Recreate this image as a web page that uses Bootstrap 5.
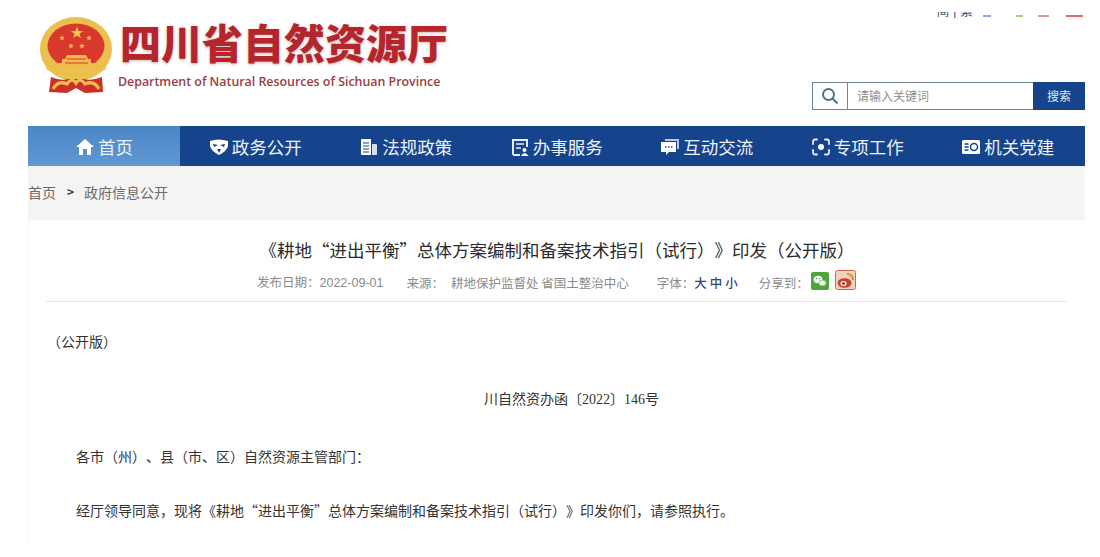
<!DOCTYPE html>
<html lang="zh-CN">
<head>
  <meta charset="UTF-8" />
  <meta name="viewport" content="width=device-width, initial-scale=1.0" />
  <title>四川省自然资源厅</title>
  <link href="https://cdn.jsdelivr.net/npm/bootstrap@5.3.3/dist/css/bootstrap.min.css" rel="stylesheet" />
  <style>
    html, body { height: 557px; overflow: hidden; }
    body { font-family: "Noto Sans CJK SC", "Liberation Sans", sans-serif; background: #fff; color: #333; text-spacing-trim: space-all; font-feature-settings: "chws" 0; }
    .site-wrap { margin-left: 28px; width: 1057px; }
    .site-head { height: 126px; }
    .emblem { margin: 17px 6px 0 12px; width: 74px; height: 78px; flex: none; }
    .brand-cn { font-weight: 900; font-size: 41px; line-height: 48px; color: #b4262c; margin-top: 17px; white-space: nowrap; text-shadow: 0 1px 3px rgba(120,30,30,.35); }
    .brand-en { font-family: "Open Sans", sans-serif; font-weight: 600; font-size: 12.4px; line-height: 16px; color: #9a3d45; margin: 9px 0 0 -2px; white-space: nowrap; }
    .lang-strip { height: 8px; margin-top: 12px; overflow: hidden; margin-right: 2px; font-size: 13px; color: #44577e; }
    .lang-text { margin-top: -9px; line-height: 16px; white-space: nowrap; font-family: "Liberation Sans", "Noto Sans CJK SC", sans-serif; }
    .dash-mark { display: block; height: 2px; margin-top: 3px; }
    .search-box { width: 273px; height: 28px; border: 1px solid #6e8598; margin-top: 62px; }
    .search-icon { width: 35px; border-right: 1px solid #6e8598; }
    .search-input { font-size: 12px; color: #8d8d8d; padding-left: 9px; line-height: 26px; }
    .search-btn { width: 52px; margin: -1px; background: #15448c; color: #dfe8f5; font-size: 12px; line-height: 28px; text-align: center; }
    .main-nav { height: 40px; background: #15448c; }
    .nav-cell { width: 150.5px; color: #eef2f8; font-size: 17.5px; gap: 3px; white-space: nowrap; padding-top: 3px; }
    .nav-cell.is-on { background: linear-gradient(#4b86c6, #6198d2); width: 152px; }
    .nav-ico { width: 20px; height: 20px; flex: none; margin-top: -2px; }
    .crumb-bar { height: 54px; background: #f4f4f5; font-size: 14px; color: #6a6a6a; padding-bottom: 2px; }
    .crumb-sep { color: #333; margin: 0 10px 0 11px; font-weight: 700; font-size: 12px; }
    .article-box { border-left: 1px solid #f5f5f5; height: 325px; }
    .art-title { font-size: 17.5px; line-height: 24px; color: #2b2b2b; padding-top: 18px; margin: 0; font-weight: 400; }
    .art-meta { font-size: 12.5px; color: #8b8b8b; height: 32px; margin: 8px 18px 0 17px; padding: 0 0 5px 211px; border-bottom: 1px solid #e6e6e6; white-space: nowrap; }
    .meta-num { font-family: "Liberation Sans", sans-serif; }
    .meta-from { margin-left: 23px; }
    .meta-src { margin-left: 7px; }
    .meta-font { margin-left: 28px; }
    .meta-share { margin-left: 18px; }
    .font-pick { color: #34437f; font-weight: 500; letter-spacing: 3px; }
    .share-wx { margin: 2px 0 0 2px; }
    .share-wb { margin-left: 6px; }
    .art-body { font-size: 14px; color: #333; line-height: 20px; }
    .art-body p { margin: 0; white-space: nowrap; }
    .num-serif { font-family: "Liberation Serif", serif; }
    .line-a { padding: 29px 0 0 18px; }
    .line-b { padding-top: 37px; padding-left: 455px; }
    .line-c { padding: 36px 0 0 47px; }
    .line-d { padding: 34px 0 0 47px; }
  </style>
</head>
<body>
  <div class="site-wrap">
    <header class="site-head d-flex justify-content-between">
      <div class="d-flex">
        <svg class="emblem" viewBox="0 0 74 78">
          <defs>
            <polygon id="gold-star" points="0,-5 1.200,-1.600 4.800,-1.600 1.900,0.600 3,4 0,2 -3,4 -1.900,0.600 -4.800,-1.600 -1.200,-1.600"/>
          </defs>
          <ellipse cx="36" cy="32" rx="36" ry="32" fill="#ecc04f"/>
          <ellipse cx="36" cy="29" rx="28.500" ry="22.500" fill="#d9392c"/>
          <path d="M8 46 Q36 64 64 46 L66 52 Q36 70 6 52 Z" fill="#ecc04f"/>
          <path d="M11 60 Q20 64 28 62 L44 62 Q52 64 62 60 L63 75 L45 76 L36 71 L27 76 L9 75 Z" fill="#cb2f27"/>
          <path d="M13 72 Q18 63 27 67 Q32 60 36 66 Q40 60 45 67 Q54 63 59 72" fill="none" stroke="#efbd50" stroke-width="3.200"/>
          <g fill="#f3c655">
            <use href="#gold-star" transform="translate(37 16) scale(1.300)"/>
            <use href="#gold-star" transform="translate(22 21) scale(.6)"/>
            <use href="#gold-star" transform="translate(49 21) scale(.6)"/>
            <use href="#gold-star" transform="translate(31 29) scale(.6)"/>
            <use href="#gold-star" transform="translate(42 29) scale(.6)"/>
          </g>
          <path d="M27 38 H46 L48 42 H51 V46 H55 V52 H18 V46 H22 V42 H25 Z" fill="#eebc4d"/>
          <path d="M27 42 H46 M25 46 H48" stroke="#d9392c"/>
        </svg>
        <div>
          <div class="brand-cn">四川省自然资源厅</div>
          <div class="brand-en">Department of Natural Resources of Sichuan Province</div>
        </div>
      </div>
      <div class="d-flex flex-column align-items-end">
        <div class="lang-strip d-flex">
          <div class="lang-text">简 | 繁</div>
          <span class="dash-mark" style="width:8px;margin-left:10px;background:#8fa8cf"></span>
          <span class="dash-mark" style="width:7px;margin-left:25px;background:#a5cf7a"></span>
          <span class="dash-mark" style="width:11px;margin-left:15px;background:#d99a95"></span>
          <span class="dash-mark" style="width:17px;margin-left:17px;background:#e2696a"></span>
        </div>
        <div class="search-box d-flex">
          <div class="search-icon d-flex align-items-center justify-content-center">
            <svg width="18" height="18" viewBox="0 0 18 18" fill="none" stroke="#4d7186" stroke-width="2"><circle cx="7.500" cy="7.500" r="5.500"/><path d="M11.500 11.500 L16.500 16.500"/></svg>
          </div>
          <div class="search-input flex-grow-1">请输入关键词</div>
          <div class="search-btn">搜索</div>
        </div>
      </div>
    </header>

    <nav class="main-nav d-flex">
      <a class="nav-cell is-on d-flex align-items-center justify-content-center text-decoration-none">
        <svg class="nav-ico" viewBox="0 0 20 20" fill="#fff"><path d="M10 2 L19 10 H16 V18 H12 V12 H8 V18 H4 V10 H1 Z"/></svg>首页</a>
      <a class="nav-cell d-flex align-items-center justify-content-center text-decoration-none">
        <svg class="nav-ico" viewBox="0 0 20 20"><path d="M1 4 Q10 1 19 4 V9 Q18 14 10 18 Q2 14 1 9 Z" fill="#fff"/><path d="M4 7 L9 8 L5 10 Z M16 7 L11 8 L15 10 Z M8 12 H12 L10 16 Z" fill="#15448c"/></svg>政务公开</a>
      <a class="nav-cell d-flex align-items-center justify-content-center text-decoration-none">
        <svg class="nav-ico" viewBox="0 0 20 20"><path d="M2 3 Q2 2 3 2 H12 V18 H3 Q2 18 2 17 Z" fill="#fff"/><path d="M13 7 H17 Q18 7 18 8 V17 Q18 18 17 18 H13 Z" fill="#d5deeb"/><path d="M4 6 H10 M4 9 H10 M4 12 H10 M4 15 H10" stroke="#15448c"/></svg>法规政策</a>
      <a class="nav-cell d-flex align-items-center justify-content-center text-decoration-none">
        <svg class="nav-ico" viewBox="0 0 20 20"><path d="M3 18 V3 H17 V10 M3 18 H10" fill="none" stroke="#e6ecf5" stroke-width="2"/><path d="M6 7 H14 M6 11 H11" stroke="#e6ecf5" stroke-width="1.500"/><circle cx="14.500" cy="13" r="2" fill="#fff"/><path d="M11 19 Q14.500 13 18.500 19 Z" fill="#fff"/></svg>办事服务</a>
      <a class="nav-cell d-flex align-items-center justify-content-center text-decoration-none">
        <svg class="nav-ico" viewBox="0 0 20 20"><path d="M5 2 H19 V12 H17 V4 H5 Z" fill="#b9c8e0"/><path d="M1 5 H16 V15 H9 L6 18 V15 H1 Z" fill="#fff"/><path d="M5 10 H6.500 M8 10 H9.500 M11 10 H12.500" stroke="#15448c" stroke-width="1.500"/></svg>互动交流</a>
      <a class="nav-cell d-flex align-items-center justify-content-center text-decoration-none">
        <svg class="nav-ico" viewBox="0 0 20 20" fill="none" stroke="#e6ecf5" stroke-width="1.800" stroke-linecap="round"><path d="M6 2.500 H4 Q2 2.500 2 5 V7 M14 2.500 H16 Q18 2.500 18 5 V7 M6 17.500 H4 Q2 17.500 2 15 V13 M14 17.500 H16 Q18 17.500 18 15 V13"/><circle cx="10" cy="10" r="3" fill="#fff" stroke="none"/></svg>专项工作</a>
      <a class="nav-cell d-flex align-items-center justify-content-center text-decoration-none">
        <svg class="nav-ico" viewBox="0 0 20 20"><rect x="1" y="3" width="18" height="14" rx="1.500" fill="#fff"/><path d="M3.500 7 H7.500 M3.500 10 H7.500 M3.500 13 H7.500" stroke="#15448c" stroke-width="1.300"/><circle cx="13" cy="10" r="3.500" fill="none" stroke="#15448c" stroke-width="1.500"/></svg>机关党建</a>
    </nav>

    <div class="crumb-bar d-flex align-items-center">
      <span>首页</span><span class="crumb-sep">&gt;</span><span>政府信息公开</span>
    </div>

    <main class="article-box">
      <h1 class="art-title text-center">《耕地“进出平衡”总体方案编制和备案技术指引（试行）》印发（公开版）</h1>
      <div class="art-meta d-flex align-items-center">
        <span>发布日期：<span class="meta-num">2022-09-01</span></span>
        <span class="meta-from">来源：</span>
        <span class="meta-src">耕地保护监督处 省国土整治中心</span>
        <span class="meta-font">字体：<span class="font-pick">大中小</span></span>
        <span class="meta-share">分享到：</span>
        <svg class="share-wx align-self-start" width="18" height="18" viewBox="0 0 18 18"><rect width="18" height="18" rx="2" fill="#4fa53c"/><ellipse cx="7" cy="7.500" rx="4.500" ry="3.800" fill="#fff"/><ellipse cx="11.500" cy="11" rx="3.800" ry="3" fill="#e8f5e0" stroke="#4fa53c" stroke-width=".6"/><circle cx="5.500" cy="6.500" r=".8" fill="#4fa53c"/><circle cx="8.500" cy="6.500" r=".8" fill="#4fa53c"/></svg>
        <svg class="share-wb align-self-start" width="21" height="20" viewBox="0 0 21 20"><rect x=".5" y=".5" width="20" height="19" rx="2" fill="#f1d2bb" stroke="#c8685a"/><ellipse cx="9.500" cy="13" rx="7" ry="4.800" fill="#c9412f"/><ellipse cx="8.500" cy="13.500" rx="3" ry="2.500" fill="#fff"/><circle cx="8.500" cy="13.500" r="1.300" fill="#222"/><path d="M12 4 Q18 4 18 10" fill="none" stroke="#e08a2e" stroke-width="2"/></svg>
      </div>
      <div class="art-body">
        <p class="line-a">（公开版）</p>
        <p class="line-b">川自然资办函〔<span class="num-serif">2022</span>〕<span class="num-serif">146</span>号</p>
        <p class="line-c">各市（州）、县（市、区）自然资源主管部门：</p>
        <p class="line-d">经厅领导同意，现将《耕地“进出平衡”总体方案编制和备案技术指引（试行）》印发你们，请参照执行。</p>
      </div>
    </main>
  </div>
  <script src="https://cdn.jsdelivr.net/npm/bootstrap@5.3.3/dist/js/bootstrap.bundle.min.js"></script>
</body>
</html>
